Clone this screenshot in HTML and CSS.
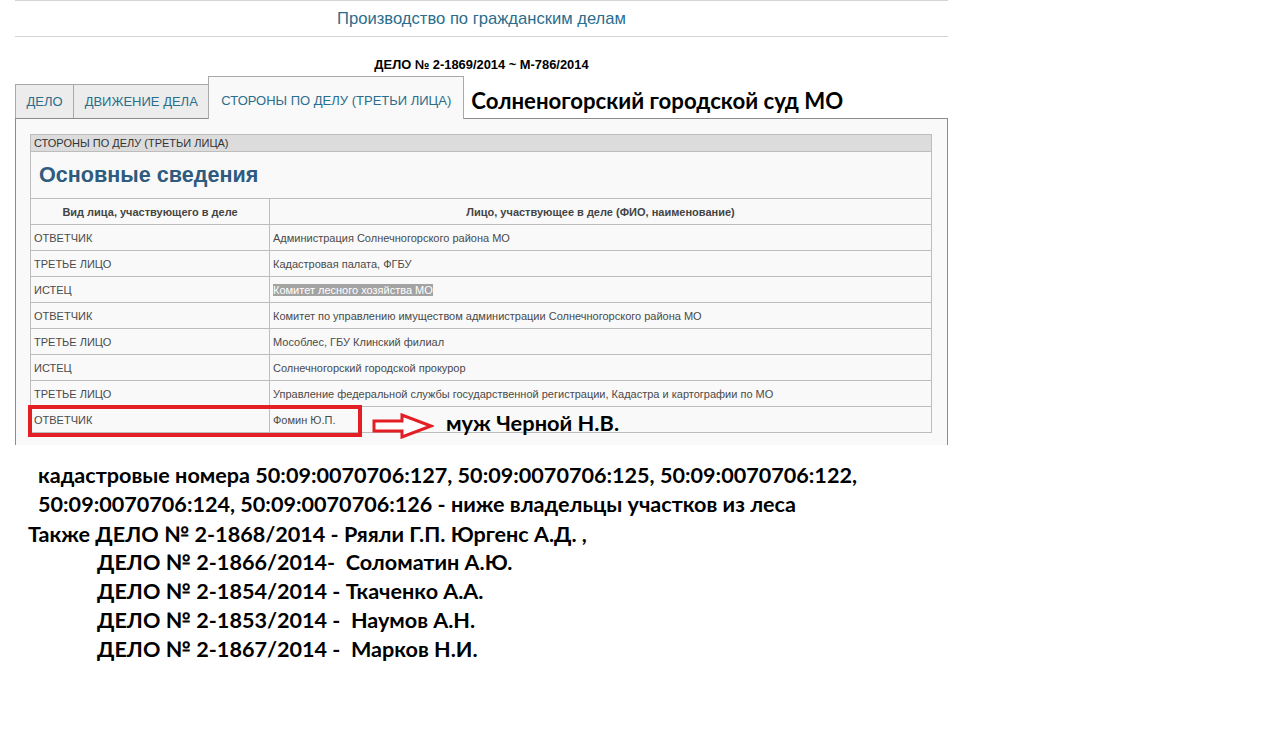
FILE: index.html
```html
<!DOCTYPE html>
<html lang="ru">

<head>
  <meta charset="UTF-8">
  <meta name="viewport" content="width=device-width, initial-scale=1.0">
  <title>Производство по гражданским делам</title>

  <link rel="stylesheet" href="styles.css">
</head>

<body>
  <div class="page">
    <div class="pageTitle">Производство по гражданским делам</div>

    <div class="caseNo">ДЕЛО № 2-1869/2014 ~ М-786/2014</div>

    <div class="tabs">
      <a href="#" class="tab">ДЕЛО</a>
      <a href="#" class="tab">ДВИЖЕНИЕ ДЕЛА</a>
      <a href="#" class="tab active">СТОРОНЫ ПО ДЕЛУ (ТРЕТЬИ ЛИЦА)</a>
      <span class="court">Солненогорский городской суд МО</span>
    </div>

    <div class="panel">
      <table class="parties">
        <tr>
          <th colspan="2" class="caption">СТОРОНЫ ПО ДЕЛУ (ТРЕТЬИ ЛИЦА)</th>
        </tr>
        <tr>
          <td colspan="2" class="heading">Основные сведения</td>
        </tr>
        <tr>
          <th class="colHead first">Вид лица, участвующего в деле</th>
          <th class="colHead">Лицо, участвующее в деле (ФИО, наименование)</th>
        </tr>
        <tr><td>ОТВЕТЧИК</td><td>Администрация Солнечногорского района МО</td></tr>
        <tr><td>ТРЕТЬЕ ЛИЦО</td><td>Кадастровая палата, ФГБУ</td></tr>
        <tr><td>ИСТЕЦ</td><td><span class="mark">Комитет лесного хозяйства МО </span></td></tr>
        <tr><td>ОТВЕТЧИК</td><td>Комитет по управлению имуществом администрации Солнечногорского района МО</td></tr>
        <tr><td>ТРЕТЬЕ ЛИЦО</td><td>Мособлес, ГБУ Клинский филиал</td></tr>
        <tr><td>ИСТЕЦ</td><td>Солнечногорский городской прокурор</td></tr>
        <tr><td>ТРЕТЬЕ ЛИЦО</td><td>Управление федеральной службы государственной регистрации, Кадастра и картографии по МО</td></tr>
        <tr class="lastRow"><td>ОТВЕТЧИК</td><td>Фомин Ю.П.</td></tr>
      </table>

      <!-- пометки поверх таблицы -->
      <div class="redBox"></div>
      <svg class="arrow" width="62" height="26" viewBox="0 0 62 26">
        <polygon points="2,8 30,8 30,2 59,13 30,24 30,18 2,18" fill="#fff" stroke="#e31e24" stroke-width="3" stroke-linejoin="miter" />
      </svg>
      <div class="husband">муж Черной Н.В.</div>
    </div>
  </div>

  <div class="notes">
    <p class="n1">кадастровые номера 50:09:0070706:127, 50:09:0070706:125, 50:09:0070706:122,</p>
    <p class="n1">50:09:0070706:124, 50:09:0070706:126 - ниже владельцы участков из леса</p>
    <p class="n2">Также ДЕЛО № 2-1868/2014 - Ряяли Г.П. Юргенс А.Д. ,</p>
    <p class="n3">ДЕЛО № 2-1866/2014-&nbsp; Соломатин А.Ю.</p>
    <p class="n3">ДЕЛО № 2-1854/2014 - Ткаченко А.А.</p>
    <p class="n3">ДЕЛО № 2-1853/2014 -&nbsp; Наумов А.Н.</p>
    <p class="n3">ДЕЛО № 2-1867/2014 -&nbsp; Марков Н.И.</p>
  </div>
</body>

</html>
```

FILE: styles.css
```css
body {
  margin: 0;
  font-family: "Liberation Sans", Arial, sans-serif;
  background: #fff;
  color: #000;
}

.page {
  width: 933px;
  margin-left: 15px;
}

.pageTitle {
  border-top: 1px solid #d4d4d4;
  border-bottom: 1px solid #d4d4d4;
  height: 35px;
  line-height: 35px;
  text-align: center;
  font-size: 16.6px;
  color: #2a6d8c;
}

.caseNo {
  margin-top: 20px;
  height: 16px;
  line-height: 16px;
  text-align: center;
  font-size: 12.9px;
  font-weight: bold;
}

.tabs {
  display: flex;
  align-items: flex-end;
  margin-top: 3px;
  height: 42px;
}

.tab {
  display: block;
  height: 33px;
  line-height: 33px;
  padding: 0 10.5px;
  font-size: 13px;
  color: #2a6d8c;
  text-decoration: none;
  background: #ececec;
  border: 1px solid #a9a9a9;
  border-bottom: none;
  margin-right: -1px;
}

.tab.active {
  height: 42px;
  line-height: 48px;
  padding: 0 12px;
  background: #f9f9f9;
  position: relative;
  z-index: 1;
  margin-bottom: -1px;
}

.court {
  align-self: center;
  margin-left: 8px;
  margin-top: 6px;
  font-family: Lato, "Open Sans", sans-serif;
  font-weight: bold;
  font-size: 22.2px;
}

.panel {
  position: relative;
  background: #f9f9f9;
  border: 1px solid #8c8c8c;
  border-bottom: none;
  padding: 15px 15px 12px 14px;
}

.parties {
  width: 902px;
  border-collapse: collapse;
  font-size: 11px;
  color: #4a4a4a;
}

.parties td,
.parties th {
  border: 1px solid #bdbdbd;
  padding: 0 3px;
  height: 25px;
  text-align: left;
  font-weight: normal;
}

.parties .caption {
  height: 16px;
  background: #dcdcdc;
  color: #333;
}

.parties .heading {
  height: 46px;
  padding-left: 8px;
  font-size: 21.6px;
  font-weight: bold;
  color: #2e5b7e;
}

.parties .colHead {
  text-align: center;
  font-weight: bold;
  color: #444;
}

.parties .first {
  width: 232px;
}

.mark {
  background: #a3a3a3;
  color: #fff;
}

.redBox {
  position: absolute;
  left: 12px;
  top: 286px;
  width: 326px;
  height: 24px;
  border: 4px solid #e31e24;
}

.arrow {
  position: absolute;
  left: 356px;
  top: 294px;
}

.husband {
  position: absolute;
  left: 430px;
  top: 290px;
  font-family: Lato, "Open Sans", sans-serif;
  font-weight: bold;
  font-size: 21.8px;
}

.notes {
  margin-top: 16px;
  font-family: Lato, "Open Sans", sans-serif;
  font-weight: bold;
  font-size: 21.6px;
}

.notes p {
  margin: 0;
  line-height: 28.75px;
  white-space: nowrap;
}

.notes .n1 {
  padding-left: 38px;
}

.notes .n2 {
  padding-left: 28px;
  margin-top: 1px;
}

.notes .n3 {
  padding-left: 97px;
}
```
